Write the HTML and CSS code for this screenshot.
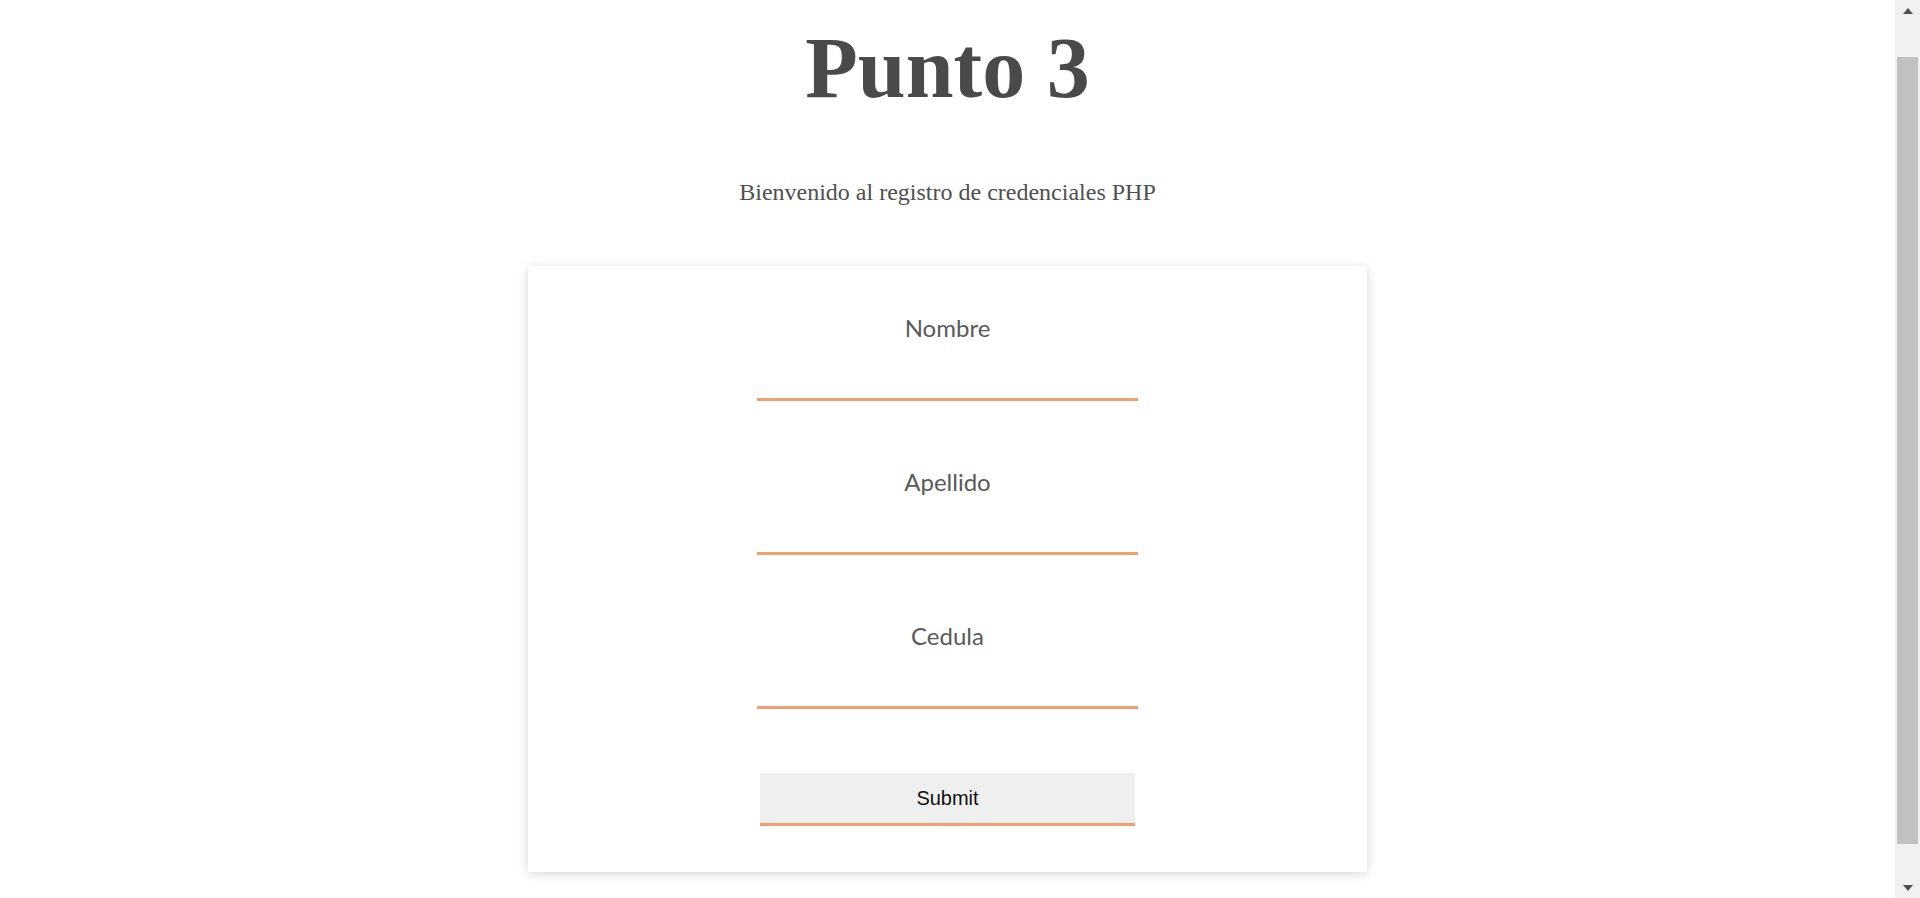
FILE: index.html
```html
<!DOCTYPE html>
<html lang="es">
<head>
<meta charset="utf-8">
<title>Punto 3</title>
<link rel="stylesheet" href="styles.css">
</head>
<body>
<div class="page">
  <h1 class="title">Punto 3</h1>
  <p class="subtitle">Bienvenido al registro de credenciales PHP</p>
  <form class="card" action="#" method="post">
    <div class="field">
      <label class="field-label" for="nombre">Nombre</label>
      <input class="field-input" type="text" id="nombre" name="nombre">
    </div>
    <div class="field">
      <label class="field-label" for="apellido">Apellido</label>
      <input class="field-input" type="text" id="apellido" name="apellido">
    </div>
    <div class="field">
      <label class="field-label" for="cedula">Cedula</label>
      <input class="field-input" type="text" id="cedula" name="cedula">
    </div>
    <button class="submit" type="submit">Submit</button>
  </form>
</div>
<div class="scrollbar" aria-hidden="true">
  <div class="scroll-arrow scroll-arrow-up"></div>
  <div class="scroll-track">
    <div class="scroll-thumb"></div>
  </div>
  <div class="scroll-arrow scroll-arrow-down"></div>
</div>
<script src="script.js"></script>
</body>
</html>
```

FILE: styles.css
```css
html, body {
  margin: 0;
  padding: 0;
  background: #ffffff;
}

.page {
  padding: 63px 25px 63px 0;
  display: flex;
  flex-direction: column;
  align-items: center;
  font-family: "Liberation Serif", "Times New Roman", serif;
}

.title {
  margin: 0;
  font-size: 86px;
  line-height: 100px;
  font-weight: bold;
  color: #4a4a4a;
}

.subtitle {
  margin: 60px 0 0;
  font-size: 24px;
  line-height: 28px;
  color: #4f4f4f;
}

.card {
  margin-top: 60px;
  width: 839px;
  box-sizing: border-box;
  padding: 48px 0 46px;
  background: #ffffff;
  box-shadow: 0 2px 10px rgba(0, 0, 0, 0.16);
  display: flex;
  flex-direction: column;
  align-items: center;
  gap: 67px;
}

.field {
  display: flex;
  flex-direction: column;
  align-items: center;
}

.field-label {
  font-family: Lato, "Open Sans", sans-serif;
  font-size: 24px;
  line-height: 28px;
  color: #5a5a5a;
}

.field-input {
  display: block;
  width: 381px;
  height: 59px;
  box-sizing: border-box;
  margin: 0;
  padding: 0 4px;
  border: none;
  border-bottom: 3px solid #f0a06e;
  background: transparent;
  outline: none;
  font-family: Lato, sans-serif;
  font-size: 20px;
  text-align: center;
  color: #333;
}

.card .submit {
  margin-top: -3px;
}

.submit {
  display: block;
  width: 375px;
  height: 53px;
  box-sizing: border-box;
  border: none;
  border-bottom: 3px solid #f0a06e;
  background: #efefef;
  font-family: "Liberation Sans", Arial, sans-serif;
  font-size: 20px;
  color: #111111;
  padding: 0;
  cursor: pointer;
}

/* decorative browser scrollbar, drawn over the page edge */
.scrollbar {
  position: fixed;
  top: 0;
  right: 0;
  bottom: 0;
  width: 25px;
  background: #f1f1f1;
  display: flex;
  flex-direction: column;
}

.scroll-arrow {
  height: 21px;
  display: flex;
  align-items: center;
  justify-content: center;
  flex: none;
}

.scroll-arrow::before {
  content: "";
  width: 0;
  height: 0;
  border-left: 5px solid transparent;
  border-right: 5px solid transparent;
}

.scroll-arrow-up::before {
  border-bottom: 6px solid #505050;
}

.scroll-arrow-down::before {
  border-top: 6px solid #505050;
}

.scroll-track {
  flex: 1;
  padding: 36px 2px 33px;
  display: flex;
  flex-direction: column;
}

.scroll-thumb {
  flex: 1;
  background: #c1c1c1;
}
```

FILE: script.js
```js
window.scrollTo(0, 45);
```
